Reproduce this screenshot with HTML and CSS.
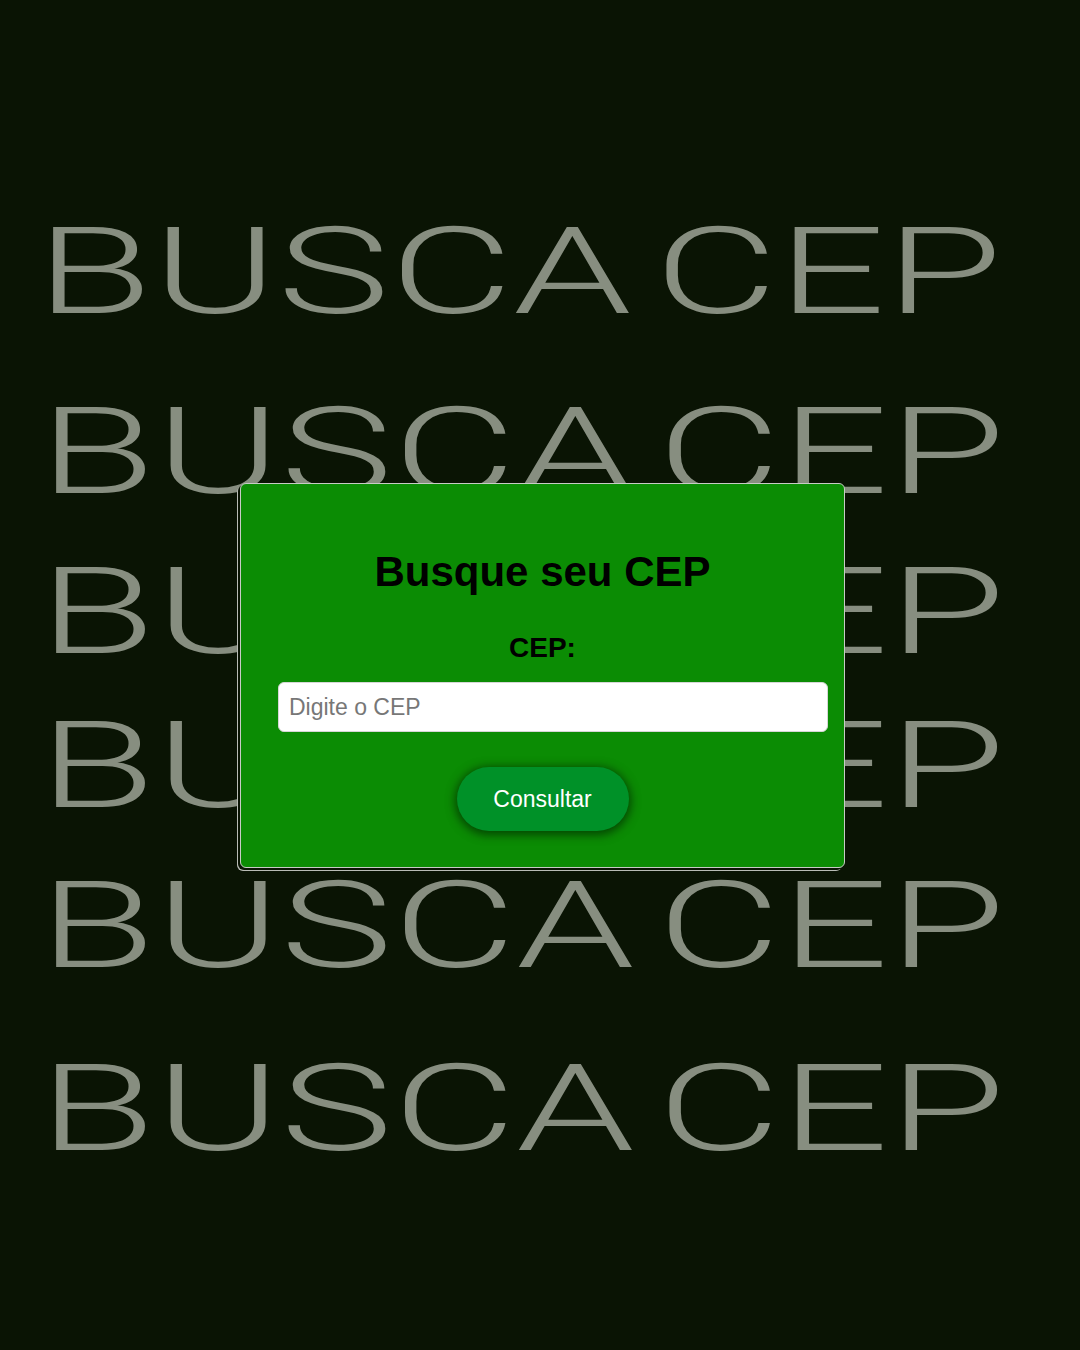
FILE: index.html
```html
<!DOCTYPE html>
<html lang="pt-BR">
<head>
<meta charset="utf-8">
<title>Busca CEP</title>
<link rel="stylesheet" href="styles.css">
</head>
<body>
<div class="page">
  <div class="bg-words" aria-hidden="true">
    <div class="word r1"><span>BUSCA CEP</span></div>
    <div class="word r2"><span>BUSCA CEP</span></div>
    <div class="word r3"><span>BUSCA CEP</span></div>
    <div class="word r4"><span>BUSCA CEP</span></div>
    <div class="word r5"><span>BUSCA CEP</span></div>
    <div class="word r6"><span>BUSCA CEP</span></div>
  </div>
  <div class="card">
    <h1 class="title">Busque seu CEP</h1>
    <label class="label" for="cep">CEP:</label>
    <input class="input" id="cep" type="text" placeholder="Digite o CEP">
    <button class="btn" type="button">Consultar</button>
  </div>
</div>
</body>
</html>
```
FILE: styles.css
```css
* { box-sizing: border-box; }
html, body { margin: 0; padding: 0; }
body {
  background: #0a1404;
  width: 1080px;
  height: 1350px;
  overflow: hidden;
}
.page {
  position: relative;
  width: 1080px;
  height: 1350px;
}
.bg-words {
  display: flex;
  flex-direction: column;
  padding-left: 39px;
  padding-top: 0;
}
.word {
  height: 124px;
  line-height: 124px;
  font-family: Roboto, "Liberation Sans", sans-serif;
  font-weight: 300;
  font-size: 120px;
  color: #878e80;
  white-space: nowrap;
}
.word span {
  display: inline-block;
  transform: scaleX(1.582);
  transform-origin: left center;
  letter-spacing: 0;
  word-spacing: -15px;
}
.r1 { margin-top: 210px; margin-left: -3px; }
.r2 { margin-top: 56px; }
.r3 { margin-top: 36px; }
.r4 { margin-top: 30px; }
.r5 { margin-top: 36px; }
.r6 { margin-top: 59px; }

.card {
  position: absolute;
  left: 240px;
  top: 483px;
  width: 605px;
  height: 385px;
  background: #0b8c04;
  border: 1px solid #c8cbc6;
  border-radius: 6px;
  box-shadow: -2px 2px 0 0 #0a1404, -3px 3px 0 0 #b9bcb6;
  display: flex;
  flex-direction: column;
  align-items: center;
  padding-top: 64px;
  font-family: "Liberation Sans", Arial, sans-serif;
}
.title {
  margin: 0;
  font-size: 42px;
  line-height: 48px;
  font-weight: 700;
  color: #000;
}
.label {
  margin-top: 36px;
  font-size: 28px;
  line-height: 32px;
  font-weight: 700;
  color: #000;
}
.input {
  margin-top: 18px;
  align-self: flex-start;
  margin-left: 37px;
  width: 550px;
  height: 50px;
  border: 1px solid #d6d6d6;
  border-radius: 6px;
  background: #fff;
  padding: 0 10px;
  font-family: "Liberation Sans", Arial, sans-serif;
  font-size: 23px;
  color: #222;
  outline: none;
}
.input::placeholder { color: #777; }
.btn {
  margin-top: 35px;
  width: 172px;
  height: 64px;
  border: none;
  border-radius: 32px;
  background: #009128;
  color: #fff;
  font-family: "Liberation Sans", Arial, sans-serif;
  font-size: 23px;
  box-shadow: 0 2px 10px 2px rgba(0, 40, 0, 0.7);
  cursor: pointer;
}
```
